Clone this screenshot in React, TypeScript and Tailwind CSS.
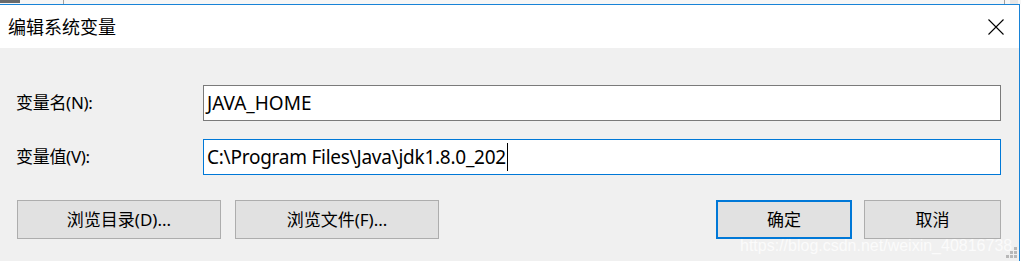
import React from "react";

const font = { fontFamily: '"Noto Sans", "Noto Sans CJK SC", sans-serif' };

export default function App() {
  return (
    <div
      className="w-[1021px] h-[261px] bg-[#f0f0f0] relative overflow-hidden flex flex-col"
      style={font}
    >
      {/* strip of window behind */}
      <div className="h-[4px] bg-[#f6f6f6] relative shrink-0">
        <div className="absolute left-[0px] top-0 w-[20px] h-[3px] bg-[#6a6a6a]" />
        <div className="absolute left-[63px] top-0 w-px h-[4px] bg-[#a0a0a0]" />
        <div className="absolute left-[1004px] top-0 w-px h-[4px] bg-[#a0a0a0]" />
        <div className="absolute left-[1010px] top-0 w-[8px] h-[4px] bg-[#e6e6e6]" />
      </div>
      <div className="flex flex-1">
        <div className="w-[1020px] flex flex-col border-t border-r border-[#1883d7]">
          {/* title bar */}
          <div className="h-[43px] bg-white flex items-center justify-between shrink-0">
            <span className="pl-[8px] text-[18px] text-black leading-none">编辑系统变量</span>
            <svg width="16" height="16" viewBox="0 0 16 16" className="mr-[15px] mt-[1px]">
              <path d="M0.5 0.5 L15.5 15.5 M15.5 0.5 L0.5 15.5" stroke="#000" strokeWidth="1.1" />
            </svg>
          </div>
          {/* body */}
          <div className="flex-1 bg-[#f0f0f0] pt-[37px] pl-[16px] pr-[18px] flex flex-col">
            <div className="flex items-center h-[36px]">
              <div className="w-[187px] text-[17px] text-black tracking-[-0.3px]">变量名(N):</div>
              <div className="flex-1 h-[36px] bg-white border border-[#7a7a7a] flex items-center pl-[3px] text-[19px] text-black">
                JAVA_HOME
              </div>
            </div>
            <div className="flex items-center h-[36px] mt-[18px]">
              <div className="w-[187px] text-[17px] text-black tracking-[-0.3px]">变量值(V):</div>
              <div className="flex-1 h-[36px] bg-white border border-[#0078d7] flex items-center pl-[3px] text-[19px] text-black">
                <span className="tracking-[-0.25px]">C:\Program Files\Java\jdk1.8.0_202</span>
                <span className="w-px h-[28px] bg-black ml-[1px]" />
              </div>
            </div>
            <div className="flex mt-[25px] h-[39px]">
              <div className="ml-[1px] w-[204px] h-[39px] bg-[#e1e1e1] border border-[#adadad] flex items-center justify-center text-[17px] text-black">
                浏览目录(D)...
              </div>
              <div className="ml-[14px] w-[204px] h-[39px] bg-[#e1e1e1] border border-[#adadad] flex items-center justify-center text-[17px] text-black">
                浏览文件(F)...
              </div>
              <div className="flex-1" />
              <div className="w-[136px] h-[39px] bg-[#e1e1e1] border-2 border-[#0078d7] flex items-center justify-center text-[17px] text-black">
                确定
              </div>
              <div className="ml-[12px] w-[137px] h-[39px] bg-[#e1e1e1] border border-[#adadad] flex items-center justify-center text-[17px] text-black">
                取消
              </div>
            </div>
          </div>
        </div>
        <div className="w-px bg-white" />
      </div>
      {/* watermark */}
      <div
        className="absolute left-[740px] top-[238px] text-[16px] text-white/75 leading-none whitespace-nowrap"
        style={{ fontFamily: '"Liberation Sans", sans-serif' }}
      >
        https://blog.csdn.net/weixin_40816738
      </div>
      {/* resize grip */}
      <div className="absolute left-[1006px] top-[247px] grid grid-cols-3 gap-[1px] w-[11px]">
        <span />
        <span />
        <span className="w-[3px] h-[3px] bg-[#b8b8b8]" />
        <span />
        <span className="w-[3px] h-[3px] bg-[#b8b8b8]" />
        <span className="w-[3px] h-[3px] bg-[#b8b8b8]" />
        <span className="w-[3px] h-[3px] bg-[#b8b8b8]" />
        <span className="w-[3px] h-[3px] bg-[#b8b8b8]" />
        <span className="w-[3px] h-[3px] bg-[#b8b8b8]" />
      </div>
    </div>
  );
}
